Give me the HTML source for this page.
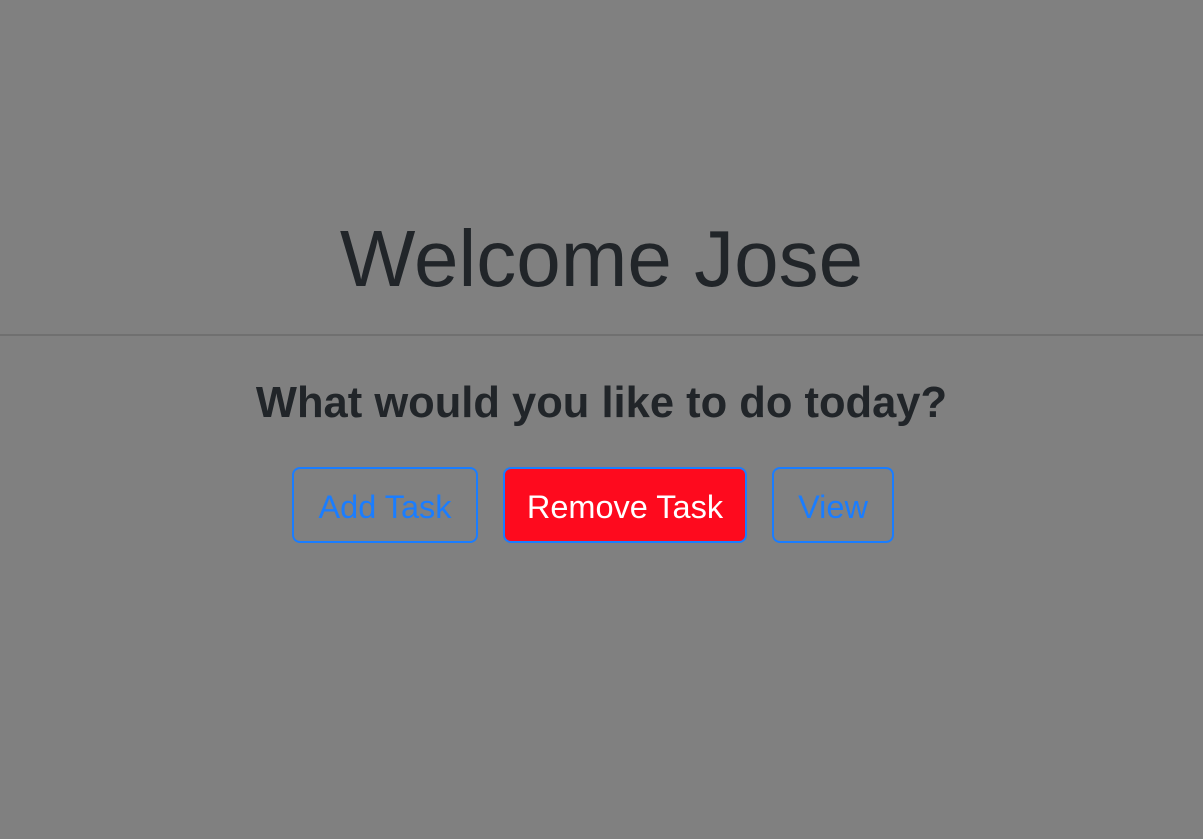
<!DOCTYPE html>
<html><head><style>
body{margin:0;width:1203px;height:839px;background:#808080;font-family:"Liberation Sans",sans-serif;position:relative;overflow:hidden}
h1{position:absolute;left:0;width:1203px;top:209px;margin:0;text-align:center;font-weight:400;font-size:80px;line-height:100px;color:#212529}
.hr{position:absolute;left:0;top:334px;width:1203px;height:2px;background:#707070}
h2{position:absolute;left:0;width:1203px;top:377px;margin:0;text-align:center;font-weight:700;font-size:43.5px;line-height:52px;color:#212529}
.b{position:absolute;top:467px;height:76px;box-sizing:border-box;border:2px solid #1a7dff;border-radius:8px;font-size:32.5px;line-height:76px;text-align:center;color:#1a7dff}
.r{background:#fe0a1e;color:#fff}
</style></head><body>
<h1>Welcome Jose</h1>
<div class="hr"></div>
<h2>What would you like to do today?</h2>
<div class="b" style="left:292px;width:186px">Add Task</div>
<div class="b r" style="left:503px;width:244px">Remove Task</div>
<div class="b" style="left:772px;width:122px">View</div>
</body></html>
